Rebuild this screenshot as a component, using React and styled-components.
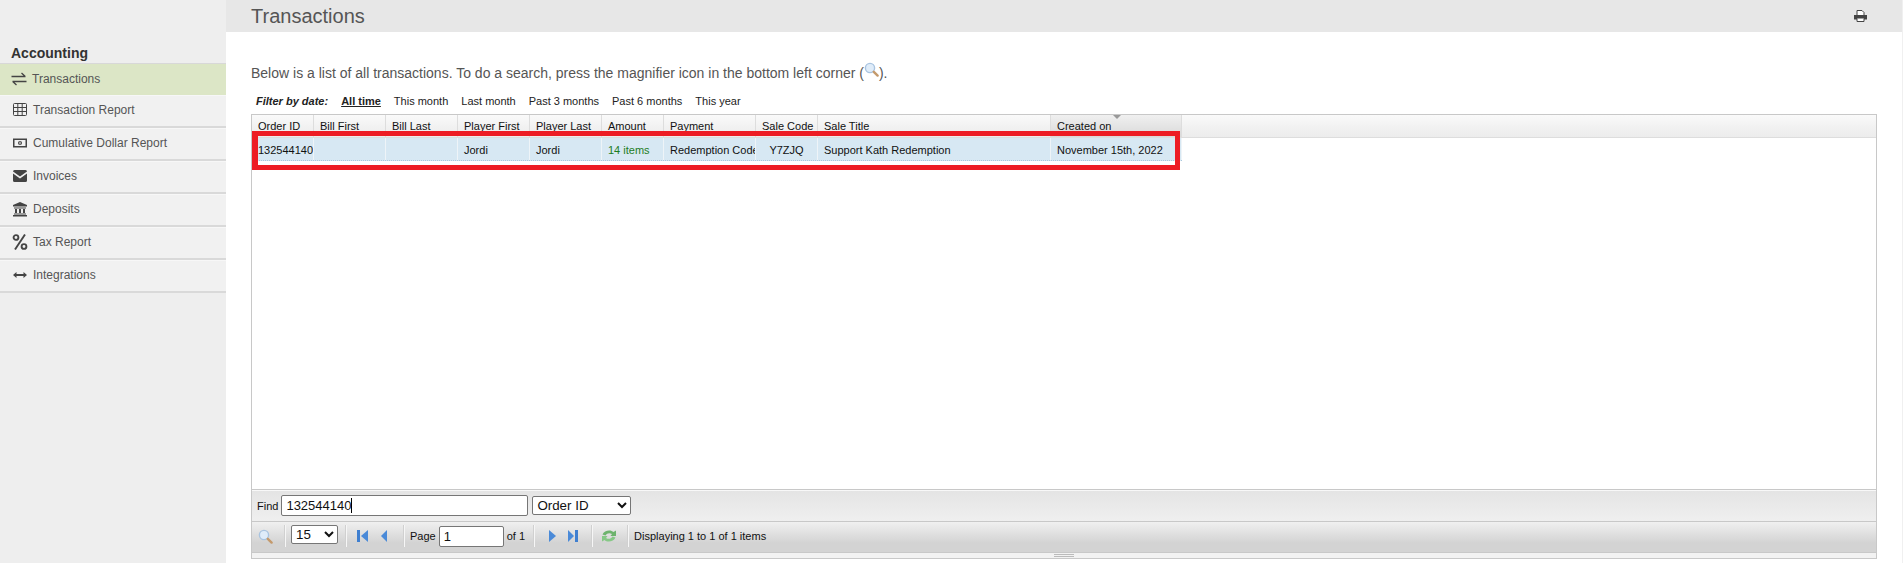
import React from 'react';
import styled, { createGlobalStyle } from 'styled-components';

const GlobalStyle = createGlobalStyle`
    html, body {
        margin: 0;
        padding: 0;
        height: 100%;
        overflow: hidden;
        background: #fff;
        font-family: "Liberation Sans", Arial, sans-serif;
    }
`;

const Page = styled.div`
    display: flex;
    width: 1903px;
    height: 563px;
    overflow: hidden;
`;

const Sidebar = styled.aside`
    width: 226px;
    flex: none;
    background: #eeeeee;
    padding-top: 45px;
    box-sizing: border-box;
`;

const SideTitle = styled.div`
    height: 18px;
    line-height: 16px;
    padding-left: 11px;
    font-size: 14px;
    font-weight: bold;
    color: #333;
    border-bottom: 1px solid #d8d8d8;
`;

const SideItem = styled.a`
    display: flex;
    align-items: center;
    box-sizing: border-box;
    height: ${({ $active }) => ($active ? '31px' : '33px')};
    padding: ${({ $active }) => ($active ? '0 0 2px 11px' : '0 0 2px 12px')};
    font-size: 12px;
    color: #555;
    background: ${({ $active }) => ($active ? '#dce6c6' : '#f1f1f1')};
    border-bottom: ${({ $active }) => ($active ? 'none' : '2px solid #d9d9d9')};
    border-top: ${({ $active }) => ($active ? 'none' : '1px solid #f7f7f7')};
`;

const SideIcon = styled.svg`
    width: 16px;
    height: 16px;
    flex: none;
    margin-right: 5px;
    fill: #444;
    stroke: #444;
`;

const Main = styled.main`
    flex: 1;
    min-width: 0;
    display: flex;
    flex-direction: column;
    border-right: 1px solid #f0f0f0;
`;

const Header = styled.header`
    height: 32px;
    flex: none;
    display: flex;
    align-items: center;
    justify-content: space-between;
    padding: 0 35px 0 25px;
    background: #e7e7e7;
`;

const Title = styled.h1`
    margin: 0;
    font-size: 20px;
    font-weight: normal;
    color: #555;
`;

const Content = styled.div`
    flex: 1;
    display: flex;
    flex-direction: column;
    padding: 32px 25px 4px 25px;
    min-height: 0;
    position: relative;
`;

const Intro = styled.p`
    margin: 0;
    height: 24px;
    line-height: 18px;
    font-size: 14px;
    color: #555;
    display: flex;
    align-items: flex-start;
`;

const FilterBar = styled.div`
    display: flex;
    align-items: center;
    gap: 13px;
    height: 26px;
    padding-left: 5px;
    font-size: 11px;
    color: #222;
`;

const FilterLabel = styled.b`
    font-style: italic;
`;

const FilterLink = styled.a`
    color: #222;
    font-weight: ${({ $active }) => ($active ? 'bold' : 'normal')};
    text-decoration: ${({ $active }) => ($active ? 'underline' : 'none')};
`;

const Grid = styled.div`
    flex: 1;
    min-height: 0;
    display: flex;
    flex-direction: column;
    border: 1px solid #c8c8c8;
    font-size: 11px;
    color: #111;
`;

const HeadRow = styled.div`
    display: flex;
    flex: none;
    height: 23px;
    background: linear-gradient(#fafafa, #f2f2f2 50%, #ececec);
    border-bottom: 1px solid #ddd;
    box-sizing: border-box;
`;

const HeadCell = styled.div`
    position: relative;
    box-sizing: border-box;
    width: ${({ $w }) => $w}px;
    flex: none;
    padding: 5px 0 0 6px;
    white-space: nowrap;
    overflow: hidden;
    border-right: 1px solid #ddd;
    background: ${({ $sorted }) => ($sorted ? 'linear-gradient(#f0f0f0, #d9d9d9)' : 'none')};
`;

const SortMark = styled.span`
    position: absolute;
    top: 0;
    left: 62px;
    width: 0;
    height: 0;
    border-left: 4px solid transparent;
    border-right: 4px solid transparent;
    border-top: 4px solid #999;
`;

const BodyArea = styled.div`
    flex: 1;
    min-height: 0;
    background: #fff;
`;

const DataRow = styled.div`
    display: flex;
    width: 930px;
    height: 23px;
    background: #d7e8f3;
    border-bottom: 1px dotted #a9c8dc;
    box-sizing: border-box;
`;

const DataCell = styled.div`
    box-sizing: border-box;
    width: ${({ $w }) => $w}px;
    flex: none;
    overflow: hidden;
    white-space: nowrap;
    line-height: 24px;
    padding-left: ${({ $pad }) => $pad ?? 6}px;
    text-align: ${({ $center }) => ($center ? 'center' : 'left')};
    color: ${({ $color }) => $color || '#111'};
    border-right: 1px solid #eef4f8;
`;

const Highlight = styled.div`
    position: absolute;
    left: 26px;
    top: 99px;
    width: 928px;
    height: 39px;
    box-sizing: border-box;
    border: 5px solid #ed1c24;
    border-left-width: 6px;
    pointer-events: none;
`;

const FindBar = styled.div`
    flex: none;
    height: 32px;
    display: flex;
    align-items: center;
    gap: 3px;
    padding-left: 5px;
    box-sizing: border-box;
    background: linear-gradient(#e4e4e4, #efefef);
    border-top: 1px solid #c8c8c8;
    box-shadow: inset 0 1px 0 #f8f8f8;
`;

const InputWrap = styled.div`
    position: relative;
    display: flex;
`;

const TextInput = styled.input`
    box-sizing: border-box;
    width: ${({ $w }) => $w}px;
    height: 21px;
    padding: 1px 4px;
    border: 1px solid #767676;
    border-radius: 2px;
    background: #fff;
    color: #111;
    font: 13px "Liberation Sans", Arial, sans-serif;
    outline: none;
`;

const Caret = styled.span`
    position: absolute;
    left: 70px;
    top: 3px;
    width: 1px;
    height: 15px;
    background: #000;
`;

const Dropdown = styled.select`
    box-sizing: border-box;
    width: ${({ $w }) => $w}px;
    height: 19px;
    margin-left: ${({ $ml }) => $ml ?? 0}px;
    margin-bottom: ${({ $mb }) => $mb ?? 0}px;
    border: 1px solid #767676;
    border-radius: 2px;
    background-color: #fff;
    color: #111;
    font: 13.33px "Liberation Sans", Arial, sans-serif;
`;

const Pager = styled.div`
    flex: none;
    height: 32px;
    display: flex;
    align-items: center;
    box-sizing: border-box;
    background: linear-gradient(#f0f0f0, #d3d3d3 70%);
    border-top: 1px solid #c8c8c8;
    border-bottom: 1px solid #c8c8c8;
    padding: 0 0 2px 6px;
`;

const Sep = styled.span`
    width: 1px;
    height: 22px;
    margin: 0 ${({ $r }) => $r}px 0 ${({ $l }) => $l}px;
    background: #f6f6f6;
    border-left: 1px solid #d0d0d0;
    flex: none;
`;

const PagerIcon = styled.svg`
    flex: none;
    display: block;
    margin-left: ${({ $ml }) => $ml ?? 0}px;
`;

const PagerText = styled.span`
    margin: 0 ${({ $r }) => $r ?? 0}px 0 ${({ $l }) => $l ?? 0}px;
    color: #111;
    white-space: nowrap;
`;

const InlineIcon = styled.svg`
    flex: none;
    margin-top: -2px;
`;

const ResizeBar = styled.div`
    flex: none;
    height: 5px;
    background: #f2f2f2;
    display: flex;
    justify-content: center;
    align-items: center;
`;

const Grip = styled.span`
    width: 20px;
    height: 1px;
    border-top: 1px solid #bbb;
    border-bottom: 1px solid #bbb;
`;

const columns = [
    ['Order ID', 62, '132544140'],
    ['Bill First', 72, ''],
    ['Bill Last', 72, ''],
    ['Player First', 72, 'Jordi'],
    ['Player Last', 72, 'Jordi'],
    ['Amount', 62, '14 items', { color: '#1e7d1e' }],
    ['Payment', 92, 'Redemption Code'],
    ['Sale Code', 62, 'Y7ZJQ', { center: true, pad: 0 }],
    ['Sale Title', 233, 'Support Kath Redemption'],
    ['Created on', 131, 'November 15th, 2022', { sorted: true }],
];

const filters = ['This month', 'Last month', 'Past 3 months', 'Past 6 months', 'This year'];

const lens = (
    <>
        <circle cx="6" cy="6" r="4.6" fill="#dfecf9" stroke="#a9c4e0" strokeWidth="1.4" />
        <path d="M9.800 9.800l3.800 3.800" stroke="#c49a6c" strokeWidth="2.400" strokeLinecap="round" />
    </>
);

// blue pager triangles, with or without the end bar
function FirstIcon({ ml }) {
    return (
        <PagerIcon $ml={ml} width="11" height="14" viewBox="0 0 11 14">
            <rect x="0" y="1" width="3" height="12" fill="#3f7fd0" />
            <path d="M11 1v12L4 7z" fill="#4a8ad8" />
        </PagerIcon>
    );
}

function PrevIcon({ ml }) {
    return (
        <PagerIcon $ml={ml} width="6" height="14" viewBox="0 0 6 14">
            <path d="M6 1v12L0 7z" fill="#4a8ad8" />
        </PagerIcon>
    );
}

function NextIcon({ ml }) {
    return (
        <PagerIcon $ml={ml} width="7" height="14" viewBox="0 0 7 14">
            <path d="M0 1v12l7-6z" fill="#4a8ad8" />
        </PagerIcon>
    );
}

function LastIcon({ ml }) {
    return (
        <PagerIcon $ml={ml} width="10" height="14" viewBox="0 0 10 14">
            <path d="M0 1v12l6-6z" fill="#4a8ad8" />
            <rect x="7" y="1" width="3" height="12" fill="#3f7fd0" />
        </PagerIcon>
    );
}

const icons = {
    exchange: (
        <g fill="none" strokeWidth="1.3">
            <path d="M0.500 5.500h14M10.500 2l3.800 3.500M15.500 10.500h-14M5.500 14l-3.800-3.500" />
        </g>
    ),
    table: (
        <g fill="none" strokeWidth="1">
            <rect x="1.500" y="1.500" width="13" height="12" rx="1" />
            <path d="M1.500 5.500h13M1.500 9.500h13M5.800 1.500v12M10.200 1.500v12" />
        </g>
    ),
    money: (
        <g>
            <path fillRule="evenodd" stroke="none" d="M1 3.500h14v9H1zM2.500 5v6h11V5z" />
            <circle cx="8" cy="8" r="2" stroke="none" />
            <rect x="7.500" y="6.800" width="1" height="2.400" fill="#f1f1f1" stroke="none" />
        </g>
    ),
    envelope: (
        <g stroke="none">
            <path d="M1 3.500a1.500 1.500 0 0 1 1.500-1.500h11A1.500 1.500 0 0 1 15 3.500L8 8.500z" />
            <path d="M1 5.500l7 5 7-5v7a1.500 1.500 0 0 1-1.500 1.500h-11A1.500 1.500 0 0 1 1 12.500z" />
        </g>
    ),
    bank: (
        <g stroke="none">
            <path d="M8 1l7 3v1.500H1V4z" />
            <path d="M2 6.500h12V7.500H2zM3 8h2v4H3zM7 8h2v4H7zM11 8h2v4h-2zM2 12.500h12v1H2zM1 14h14v1.500H1z" />
        </g>
    ),
    percent: (
        <g fill="none" strokeWidth="1.900">
            <path d="M13 0.500L3 15.500" />
            <circle cx="4" cy="3.500" r="2.400" />
            <circle cx="12" cy="12.500" r="2.400" />
        </g>
    ),
    arrows: (
        <g stroke="none">
            <path d="M1 8l3.500-3v2h7V5L15 8l-3.500 3V9h-7v2z" />
        </g>
    ),
};

const menu = [
    ['Transactions', 'exchange'],
    ['Transaction Report', 'table'],
    ['Cumulative Dollar Report', 'money'],
    ['Invoices', 'envelope'],
    ['Deposits', 'bank'],
    ['Tax Report', 'percent'],
    ['Integrations', 'arrows'],
];

export default function App() {
    return (
        <Page>
            <GlobalStyle />
            <Sidebar>
                <SideTitle>Accounting</SideTitle>
                {menu.map(([label, icon], i) => (
                    <SideItem key={label} $active={i === 0}>
                        <SideIcon viewBox="0 0 16 16">{icons[icon]}</SideIcon>
                        {label}
                    </SideItem>
                ))}
            </Sidebar>
            <Main>
                <Header>
                    <Title>Transactions</Title>
                    <svg width="13" height="12" viewBox="0 0 13 12">
                        <path d="M3 5V0.500h5l2 2V5" fill="#fff" stroke="#444" />
                        <path d="M0 5h13v4.500H0z" fill="#444" />
                        <path d="M3 8.500v3h7v-3" fill="#fff" stroke="#444" />
                    </svg>
                </Header>
                <Content>
                    <Intro>
                        Below is a list of all transactions. To do a search, press the magnifier icon in the bottom left corner (
                        <InlineIcon width="15" height="15" viewBox="0 0 15 15">{lens}</InlineIcon>
                        ).
                    </Intro>
                    <FilterBar>
                        <FilterLabel>Filter by date:</FilterLabel>
                        <FilterLink $active>All time</FilterLink>
                        {filters.map((f) => (
                            <FilterLink key={f}>{f}</FilterLink>
                        ))}
                    </FilterBar>
                    <Grid>
                        <HeadRow>
                            {columns.map(([name, w, , opts]) => (
                                <HeadCell key={name} $w={w} $sorted={opts?.sorted}>
                                    {name}
                                    {opts?.sorted && <SortMark />}
                                </HeadCell>
                            ))}
                        </HeadRow>
                        <BodyArea>
                            <DataRow>
                                {columns.map(([name, w, value, opts]) => (
                                    <DataCell key={name} $w={w} $pad={opts?.pad} $center={opts?.center} $color={opts?.color}>
                                        {value}
                                    </DataCell>
                                ))}
                            </DataRow>
                        </BodyArea>
                        <FindBar>
                            Find
                            <InputWrap>
                                <TextInput $w={247} defaultValue="132544140" />
                                <Caret />
                            </InputWrap>
                            <Dropdown $w={99} $ml={1} defaultValue="Order ID">
                                <option>Order ID</option>
                            </Dropdown>
                        </FindBar>
                        <Pager>
                            <PagerIcon width="15" height="15" viewBox="0 0 15 15">{lens}</PagerIcon>
                            <Sep $l={11} $r={5} />
                            <Dropdown $w={47} $mb={3} defaultValue="15">
                                <option>15</option>
                            </Dropdown>
                            <Sep $l={7} $r={10} />
                            <FirstIcon />
                            <PrevIcon ml={13} />
                            <Sep $l={16} $r={5} />
                            <PagerText $r={3}>Page</PagerText>
                            <TextInput $w={65} defaultValue="1" />
                            <PagerText $l={3}>of 1</PagerText>
                            <Sep $l={8} $r={14} />
                            <NextIcon />
                            <LastIcon ml={12} />
                            <Sep $l={13} $r={8} />
                            <PagerIcon width="16" height="16" viewBox="0 0 16 16">
                                <path d="M1.500 6.500C3 2.500 9.500 1 12.500 4L15 2.500V8H9.500l1.500-2C8.500 4.500 6 5 4.500 7.500z" fill="#6db36d" />
                                <path d="M14.500 9.500C13 13.500 6.500 15 3.500 12L1 13.500V8h5.500l-1.500 2c2.500 1.500 5 1 6.500-1.500z" fill="#86c886" />
                            </PagerIcon>
                            <Sep $l={10} $r={5} />
                            <PagerText>Displaying 1 to 1 of 1 items</PagerText>
                        </Pager>
                        <ResizeBar>
                            <Grip />
                        </ResizeBar>
                    </Grid>
                    <Highlight />
                </Content>
            </Main>
        </Page>
    );
}
